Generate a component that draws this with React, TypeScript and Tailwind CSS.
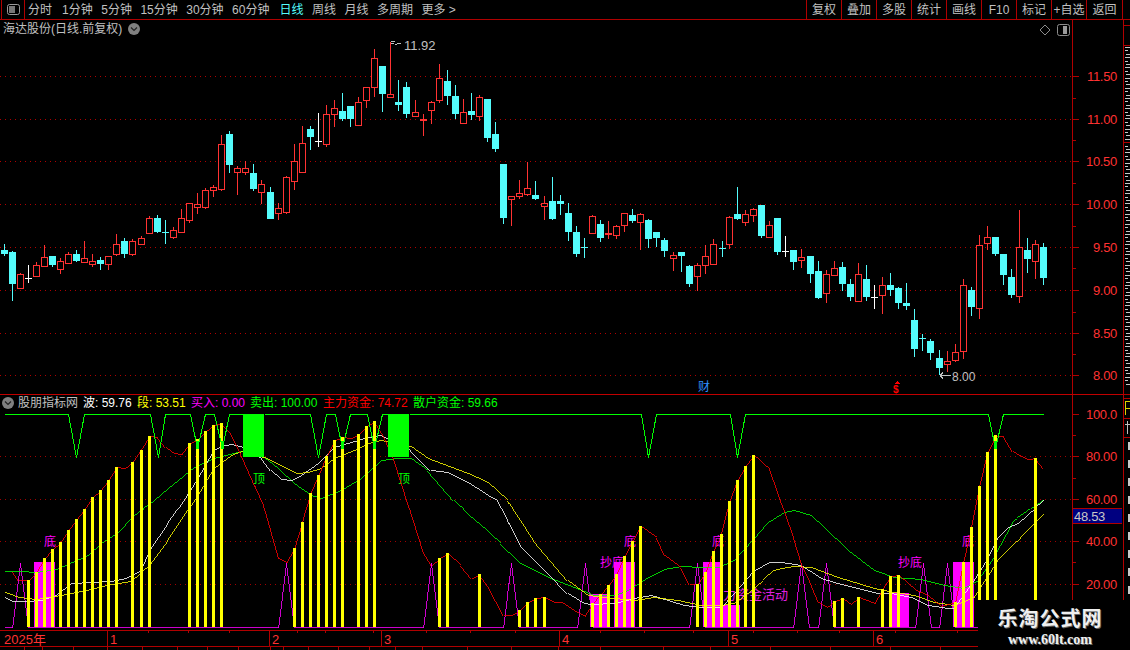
const RED = "#ff3232";
const CYAN = "#54fcfc";
const LINE = "#b00000";
const MAG = "#ff00ff";

type Raw = [number, number, number, number, number, string];

// read off the picture at 3x, so each group has its own origin
const conv = (rows: Raw[], ox: number, oy: number) =>
  rows.map(([x, hi, lo, top, bot, c]) => ({
    x: Math.round(ox + x / 3) - 0,
    hi: Math.round(oy + hi / 3),
    lo: Math.round(oy + lo / 3),
    top: Math.round(oy + top / 3),
    bot: Math.round(oy + bot / 3),
    c,
  }));

const candles = [
  ...conv(
    [
      [13, 372, 408, 390, 402, "c"], [37, 393, 543, 396, 492, "c"], [61, 459, 504, 462, 504, "r"],
      [85, 435, 489, 475, 475, "w"], [109, 426, 468, 435, 468, "r"], [133, 375, 438, 411, 438, "r"],
      [157, 408, 441, 408, 435, "c"], [181, 414, 462, 423, 447, "r"], [205, 396, 429, 402, 429, "r"],
      [229, 390, 426, 402, 423, "c"], [253, 363, 429, 414, 426, "r"], [277, 402, 441, 423, 432, "r"],
      [301, 411, 450, 420, 432, "c"], [325, 408, 450, 408, 432, "r"], [349, 342, 408, 372, 402, "r"],
      [373, 354, 414, 363, 402, "c"], [397, 357, 408, 363, 402, "r"], [424, 348, 375, 354, 372, "r"],
      [448, 288, 339, 294, 339, "r"], [472, 285, 339, 294, 336, "c"], [496, 300, 372, 337, 337, "c"],
      [520, 321, 357, 330, 351, "r"], [544, 267, 336, 294, 336, "r"], [568, 249, 309, 249, 300, "r"],
      [592, 219, 282, 252, 261, "r"], [616, 204, 267, 210, 261, "r"], [640, 195, 231, 201, 210, "r"],
      [664, 45, 213, 72, 207, "r"], [688, 33, 159, 42, 135, "c"], [712, 138, 225, 144, 156, "r"],
      [736, 123, 165, 144, 156, "r"], [760, 132, 213, 159, 207, "c"], [784, 180, 252, 192, 216, "r"],
      [811, 201, 297, 216, 297, "c"], [835, 249, 300, 264, 279, "r"], [859, 168, 282, 171, 276, "r"],
      [883, 72, 210, 123, 183, "r"], [907, 18, 159, 69, 156, "r"], [931, 18, 90, 27, 51, "c"],
      [955, -21, 81, 63, 63, "w"],
    ],
    0,
    120,
  ),
  ...conv(
    [
      [979, 315, 441, 343, 432, "r"], [1003, 300, 381, 325, 343, "r"], [1027, 280, 363, 333, 357, "c"],
      [1051, 318, 381, 318, 357, "c"], [1075, 290, 375, 306, 375, "r"], [1099, 262, 323, 262, 301, "r"],
      [1123, 148, 292, 175, 262, "r"], [1147, 198, 335, 198, 282, "c"], [1171, 125, 292, 283, 292, "r"],
      [1195, 240, 333, 306, 315, "c"], [1219, 246, 353, 261, 342, "c"], [1246, 300, 348, 336, 347, "r"],
    ],
    0,
    0,
  ),
  ...conv(
    [
      [166, 180, 228, 216, 228, "r"], [190, 222, 288, 237, 243, "f"], [214, 183, 252, 186, 210, "r"],
      [238, 72, 189, 114, 180, "r"], [262, 90, 195, 123, 168, "c"], [286, 135, 237, 168, 222, "c"],
      [310, 177, 252, 216, 249, "r"], [334, 159, 240, 213, 225, "c"], [358, 165, 243, 171, 228, "r"],
      [382, 177, 306, 177, 294, "c"], [406, 246, 336, 282, 327, "c"], [430, 372, 552, 372, 534, "c"],
      [454, 468, 558, 468, 477, "r"], [478, 420, 477, 459, 468, "r"], [502, 366, 468, 444, 462, "r"],
      [526, 423, 480, 465, 477, "c"], [553, 468, 540, 489, 498, "r"], [577, 411, 540, 483, 537, "c"],
      [601, 465, 525, 483, 492, "c"], [625, 489, 603, 519, 576, "c"], [649, 558, 651, 576, 642, "c"],
      [673, 594, 654, 622, 622, "c"], [697, 525, 579, 528, 579, "r"], [721, 540, 606, 552, 594, "c"],
      [745, 543, 597, 579, 585, "f"], [769, 555, 597, 558, 585, "r"], [793, 519, 576, 519, 555, "r"],
      [817, 507, 549, 525, 543, "c"], [841, 519, 630, 522, 546, "r"], [865, 537, 624, 540, 597, "c"],
      [889, 576, 621, 576, 594, "c"], [913, 594, 651, 600, 633, "c"], [940, 636, 693, 645, 654, "r"],
      [964, 636, 696, 636, 648, "c"], [988, 675, 741, 678, 732, "c"], [1012, 669, 753, 675, 708, "r"],
      [1036, 615, 702, 648, 675, "r"], [1060, 597, 672, 612, 672, "r"],
    ],
    360,
    40,
  ),
  ...conv(
    [
      [7, 183, 231, 204, 204, "c"], [28, 108, 207, 111, 192, "r"], [52, 21, 120, 102, 117, "c"],
      [76, 90, 138, 102, 126, "r"], [100, 84, 126, 87, 105, "r"], [124, 75, 174, 75, 168, "c"],
      [148, 123, 174, 135, 171, "r"], [172, 114, 225, 114, 216, "c"], [196, 168, 231, 212, 212, "w"],
      [220, 210, 270, 210, 246, "c"], [244, 207, 264, 231, 240, "r"], [271, 228, 309, 228, 282, "c"],
      [295, 243, 357, 273, 354, "c"], [319, 270, 369, 282, 339, "r"], [343, 243, 285, 264, 285, "r"],
      [367, 246, 333, 261, 312, "c"], [391, 297, 363, 312, 351, "c"], [415, 249, 366, 282, 363, "r"],
      [439, 255, 363, 297, 351, "c"], [463, 315, 387, 352, 352, "w"], [487, 291, 402, 315, 345, "r"],
      [511, 279, 348, 315, 330, "c"], [535, 321, 387, 324, 369, "c"], [559, 309, 390, 369, 378, "c"],
      [583, 387, 531, 420, 507, "c"], [607, 462, 513, 475, 475, "c"], [631, 477, 540, 483, 519, "c"],
      [658, 510, 585, 534, 564, "c"], [682, 513, 576, 543, 552, "r"], [706, 492, 546, 516, 540, "r"],
      [730, 297, 537, 315, 513, "r"], [754, 321, 408, 330, 381, "c"], [778, 165, 417, 195, 383, "r"],
      [802, 138, 210, 171, 189, "r"], [826, 171, 228, 171, 222, "c"], [850, 222, 315, 222, 285, "c"],
      [874, 267, 354, 291, 345, "c"], [898, 90, 369, 201, 348, "r"], [922, 174, 279, 210, 237, "c"],
      [946, 180, 297, 192, 243, "r"], [970, 189, 315, 201, 294, "c"],
    ],
    720,
    180,
  ),
];

const candleColor = (c: string) => (c === "c" ? CYAN : c === "w" ? "#ffffff" : RED);

const upperGrid = [76.5, 119.5, 161.5, 204.5, 247.5, 290.5, 333.5, 375.5];
const upperLabels = ["11.50", "11.00", "10.50", "10.00", "9.50", "9.00", "8.50", "8.00"];
const lowerGrid = [456.5, 499.5, 541.5, 584.5];

const bars: [number, number][] = [
  [28, 580], [36, 572], [44, 558], [52, 549], [60, 542], [68, 530], [76, 519], [84, 509], [92, 497], [100, 490],
  [108, 480], [116, 467], [132, 462], [141, 450], [149, 436], [189, 443], [197, 439], [205, 431], [213, 425],
  [221, 423], [310, 493], [318, 475], [326, 456], [334, 440], [342, 437], [358, 434], [366, 426], [374, 421],
  [294, 548], [302, 522], [439, 558], [447, 553], [479, 574], [519, 610], [527, 602], [535, 598], [544, 597],
  [592, 603], [600, 594], [608, 585], [616, 574], [624, 556], [632, 541], [640, 526], [697, 584], [705, 572],
  [713, 551], [721, 534], [729, 501], [737, 480], [745, 466], [753, 455], [834, 601], [842, 598], [858, 597],
  [882, 589], [890, 576], [898, 575], [955, 602], [963, 562], [971, 527], [979, 486], [987, 452], [995, 435],
  [1035, 458],
];

const fills = [
  [34, 562, 21, 65], [590, 594, 20, 33], [614, 562, 21, 65], [703, 562, 20, 65], [723, 605, 17, 22],
  [892, 593, 17, 34], [953, 562, 21, 65],
];

const spikes = [20, 286, 431, 511, 585, 697, 801, 826, 923, 947];
const magenta =
  "4,627 " +
  spikes.map((x) => `${x - 8},627 ${x - 4},595 ${x},562 ${x + 4},595 ${x + 8},627`).join(" ") +
  " 978,627";

const redLine =
  "12,571 18,580 28,580 36,572 44,558 52,549 60,542 68,530 76,519 84,509 92,497 100,490 108,480 116,467 124,468 132,462 140,450 149,436 157,437 165,447 173,453 181,454 189,443 197,439 205,431 213,425 221,423 230,432 240,453 263,505 278,558 286,562 294,548 302,522 310,493 318,475 326,456 334,440 342,437 350,438 358,434 366,426 374,421 383,435 393,458 408,505 422,550 431,565 439,558 447,553 460,565 471,578 479,574 487,585 503,615 511,615 519,610 527,602 535,598 544,597 553,602 561,602 573,610 584,616 592,603 600,594 608,585 616,574 624,556 632,541 640,526 656,537 664,555 680,567 689,584 697,584 705,572 713,551 721,534 729,501 737,480 745,466 753,455 769,468 793,537 801,563 809,580 818,602 826,607 834,601 842,598 850,604 858,597 874,603 882,589 890,576 898,575 915,590 927,595 940,606 955,602 963,562 971,527 979,486 987,452 995,436 1003,436 1012,451 1028,459 1035,458 1043,468";
const whiteLine =
  "4,597 12,601 24,601 40,600 55,595 70,583 90,582 110,581 125,578 140,570 150,548 167,523 183,500 197,478 213,450 220,446 230,444 243,447 261,458 270,470 280,479 290,480 300,475 317,463 333,447 350,442 367,437 380,435 410,450 430,470 447,472 467,482 487,495 497,500 507,520 520,545 547,572 567,593 583,603 590,604 613,603 633,598 650,595 667,600 683,605 700,607 720,607 733,593 753,570 770,562 780,562 800,565 820,578 833,582 857,588 877,593 890,593 910,597 927,605 947,608 953,608 973,580 987,558 997,537 1007,527 1017,523 1043,500";
const yellowLine =
  "4,592 18,597 35,599 60,595 85,590 110,584 130,581 150,563 167,540 197,495 213,468 230,455 243,450 263,457 280,465 295,473 307,472 320,468 333,458 353,450 367,443 380,440 410,446 427,458 467,473 487,482 507,500 533,540 567,580 587,595 613,598 633,600 653,597 677,600 700,605 720,605 733,603 753,588 773,570 780,568 793,566 810,567 837,577 873,588 893,592 913,595 933,602 953,605 973,597 997,560 1043,513";
const greenLine =
  "4,571 20,571 35,572 55,569 87,555 100,543 117,532 133,515 147,505 167,488 193,467 213,458 240,451 263,457 277,468 293,483 310,495 320,498 340,490 360,478 380,460 397,458 410,458 427,470 453,500 477,522 500,543 520,563 547,577 573,587 593,595 613,595 627,590 647,577 663,569 680,566 700,567 717,567 733,560 753,538 767,522 783,512 793,510 810,515 823,527 847,550 873,570 893,577 920,579 943,585 963,588 977,580 993,557 1013,520 1043,499";

const vs = [
  "4,414 68,414 76,457 84,414 150,414 158,457 165,414 190,414 197,448 205,414 214,414 222,448 229,414 243,414",
  "264,414 310,414 318,457 326,414 335,414 342,448 350,414 367,414 374,448 382,414 388,414",
  "409,414 641,414 648,457 656,414 730,414 737,457 745,414 988,414 995,448 1003,414 1043,414",
];

const marks = [
  { t: "底", x: 44, y: 546, c: MAG },
  { t: "抄底", x: 600, y: 567, c: MAG },
  { t: "底", x: 624, y: 546, c: MAG },
  { t: "底", x: 712, y: 546, c: MAG },
  { t: "抄底", x: 898, y: 567, c: MAG },
  { t: "底", x: 962, y: 546, c: MAG },
  { t: "顶", x: 253, y: 483, c: "#00ff00" },
  { t: "顶", x: 398, y: 483, c: "#00ff00" },
];

const leftTabs = ["1分钟", "5分钟", "15分钟", "30分钟", "60分钟"];
const rightTabs = ["复权", "叠加", "多股", "统计", "画线", "F10", "标记", "+自选", "返回"];

const months = [
  { t: "1", x: 107 }, { t: "2", x: 269 }, { t: "3", x: 381 }, { t: "4", x: 559 }, { t: "5", x: 728 }, { t: "6", x: 873 },
];
const minorTicks = [148, 188, 229, 297, 325, 373, 426, 470, 515, 600, 644, 693, 753, 797, 839, 895, 957];
const bottomTicks = [24, 42, 73, 107, 142, 177, 207, 238, 270, 283, 308, 338, 369, 395, 422, 467, 511, 558, 600, 663, 710, 770, 830, 890, 940];

// the list beside the chart runs off the window, only its left edge shows
const sideRows = Array.from({ length: 100 }, (_, i) => 47 + i * 3.4).filter((y) => y < 393 && Math.abs(y - 142) > 2);

const Circle = () => (
  <span className="inline-flex w-3 h-3 rounded-full bg-[#808080] items-center justify-center">
    <svg width="8" height="8" viewBox="0 0 8 8" fill="none" stroke="#222" strokeWidth="1.2">
      <path d="M1 2.5 L4 5.5 L7 2.5" />
    </svg>
  </span>
);

const PanelIcon = () => (
  <svg width="13" height="12" viewBox="0 0 13 12">
    <rect x="0.5" y="0.5" width="12" height="11" rx="2" fill="none" stroke="#8c8c8c" />
    <rect x="6" y="2" width="4" height="8" fill="#9a9a9a" />
  </svg>
);

const Axis = ({ items }: { items: { y: number; t: string }[] }) => (
  <>
    {items.map((i) => (
      <g key={i.t}>
        <rect x="0" y={Math.floor(i.y)} width="6" height="1" fill={LINE} />
        <text x="44" y={i.y + 4} textAnchor="end" fill={RED} fontSize="13" letterSpacing="-0.3">
          {i.t}
        </text>
      </g>
    ))}
  </>
);

export default function App() {
  return (
    <div className="relative w-[1130px] h-[650px] overflow-hidden bg-black flex flex-col text-[12px] leading-none text-[#c0c0c0] font-['Liberation_Sans','Noto_Sans_CJK_SC',sans-serif]">
      {/* toolbar */}
      <div className="h-5 shrink-0 flex items-stretch border-b border-[#b00000]">
        <div className="w-6 ml-px border-x border-[#b00000] flex items-center justify-center pl-px">
          <svg width="13" height="11" viewBox="0 0 13 11">
            <rect x="0.5" y="0.5" width="12" height="10" rx="2" fill="none" stroke="#9a9a9a" />
            <rect x="2" y="2" width="6" height="7" fill="#777" />
          </svg>
        </div>
        <div className="flex items-center pl-[3px] gap-[8.5px]">
          <span className="mr-[1.5px]">分时</span>
          {leftTabs.map((t) => (
            <span key={t}>{t}</span>
          ))}
          <span className="ml-[1.5px] text-[#54fcfc]">日线</span>
          <span>周线</span>
          <span>月线</span>
          <span>多周期</span>
          <span>更多 &gt;</span>
        </div>
        <div className="ml-auto mr-[7px] flex items-stretch">
          {rightTabs.map((t) => (
            <span key={t} className="w-[35px] flex items-center justify-center border-l border-r-0 border-[#b00000] last:border-r last:w-[37px]">
              {t}
            </span>
          ))}
        </div>
      </div>

      <div className="flex flex-1 min-h-0">
        <div className="w-[1123px] shrink-0 flex flex-col">
          {/* price chart */}
          <div className="flex h-[375px] shrink-0 border-b border-[#c00000]">
            <div className="relative w-[1072px] shrink-0">
              <svg width="1072" height="374" viewBox="0 20 1072 374" shapeRendering="crispEdges" className="block">
                {upperGrid.map((y) => (
                  <line key={y} x1="0" x2="1072" y1={y} y2={y} stroke="#b00000" strokeDasharray="1 4" />
                ))}
                {candles.map((k, i) => {
                  const color = candleColor(k.c);
                  const doji = k.top === k.bot;
                  const solid = k.c === "c" || k.c === "f";
                  return (
                    <g key={i}>
                      <rect x={k.x} y={k.hi} width="1" height={k.lo - k.hi} fill={color} />
                      {doji ? (
                        <rect x={k.x - 3} y={k.top} width="7" height="1" fill={color} />
                      ) : solid ? (
                        <rect x={k.x - 3} y={k.top} width="7" height={k.bot - k.top} fill={color} />
                      ) : (
                        <rect x={k.x - 2.5} y={k.top + 0.5} width="6" height={k.bot - k.top} fill="#000" stroke={color} />
                      )}
                    </g>
                  );
                })}
                <path d="M391 41.5 h4 M391 43.5 h3 M395 44.5 h2 M397 43.5 h4" stroke="#c0c0c0" fill="none" />
                <text x="404" y="50" fill="#c0c0c0" fontSize="13">11.92</text>
                <path d="M951 375.5 H940 M940 375.5 l3 -3 M940 375.5 l3 3" stroke="#c0c0c0" fill="none" />
                <text x="952" y="381" fill="#c0c0c0" fontSize="12">8.00</text>
                <text x="698" y="391" fill="#2f8fff" fontSize="12">财</text>
                <path d="M897 381 l3 3 h-6 z" fill="#ff0000" />
                <text x="893" y="393" fill="#ff0000" fontSize="10" fontWeight="700">$</text>
              </svg>
              <div className="absolute left-[3px] top-[3px] flex items-center gap-[6px]">
                <span>海达股份(日线.前复权)</span>
                <Circle />
              </div>
              <div className="absolute right-[2px] top-[4px] flex items-center gap-[6px]">
                <svg width="12" height="12" viewBox="0 0 12 12" fill="none" stroke="#8c8c8c">
                  <path d="M6 1 L11 6 L6 11 L1 6 Z" />
                </svg>
                <PanelIcon />
              </div>
            </div>
            <div className="flex-1 border-l border-[#b00000]">
              <svg width="50" height="374" viewBox="0 20 50 374" className="block" shapeRendering="crispEdges">
                <Axis items={upperGrid.map((y, i) => ({ y, t: upperLabels[i] }))} />
                {[98, 140, 183, 226, 268, 312, 354].map((y) => (
                  <rect key={y} x="0" y={y} width="3" height="1" fill={LINE} />
                ))}
              </svg>
            </div>
          </div>

          {/* indicator */}
          <div className="flex h-[235px] shrink-0">
            <div className="relative w-[1072px] shrink-0">
              <svg width="1072" height="235" viewBox="0 395 1072 235" shapeRendering="crispEdges" className="block">
                {lowerGrid.map((y) => (
                  <line key={y} x1="0" x2="1072" y1={y} y2={y} stroke="#a00000" strokeDasharray="1 4" />
                ))}
                <text x="710" y="599" fill="#e020e0" fontSize="13">主力资金活动</text>
                {marks.map((m) => (
                  <text key={m.x} x={m.x} y={m.y} fill={m.c} fontSize="12">{m.t}</text>
                ))}
                {fills.map(([x, y, w, h]) => (
                  <rect key={x} x={x} y={y} width={w} height={h} fill={MAG} />
                ))}
                <g transform="translate(0.5 0.5)" strokeWidth="0.8">
                  <polyline points={magenta} fill="none" stroke={MAG} />
                  <polyline points={greenLine} fill="none" stroke="#00ff00" />
                  <polyline points={whiteLine} fill="none" stroke="#ffffff" />
                  <polyline points={yellowLine} fill="none" stroke="#ffff00" />
                  <polyline points={redLine} fill="none" stroke="#ff0000" />
                </g>
                {bars.map(([x, top]) => (
                  <rect key={x} x={x - 1} y={top} width="3" height={627 - top} fill="#ffff00" />
                ))}
                <g transform="translate(0.5 0.5)">
                  {vs.map((p) => (
                    <polyline key={p} points={p} fill="none" stroke="#00ff00" />
                  ))}
                </g>
                {[197, 222, 342, 374, 995].map((x) => (
                  <rect key={x} x={x - 1} y="441" width="3" height="8" fill="#00ff00" />
                ))}
                <rect x="243" y="414" width="21" height="43" fill="#00ff00" />
                <rect x="388" y="414" width="21" height="43" fill="#00ff00" />
              </svg>
              <div className="absolute left-[2px] top-[2px] flex items-center whitespace-nowrap">
                <Circle />
                <span className="ml-1 w-[65px]">股朋指标网</span>
                <span className="text-white w-[54px]">波: 59.76</span>
                <span className="text-[#ffff00] w-[54px]">段: 53.51</span>
                <span className="text-[#ff00ff] w-[59px]">买入: 0.00</span>
                <span className="text-[#00ff00] w-[73px]">卖出: 100.00</span>
                <span className="text-[#ff0000] w-[90px]">主力资金: 74.72</span>
                <span className="text-[#00ff00]">散户资金: 59.66</span>
              </div>
            </div>
            <div className="relative flex-1 border-l border-[#b00000]">
              <svg width="50" height="235" viewBox="0 395 50 235" className="block" shapeRendering="crispEdges">
                <Axis
                  items={[
                    { y: 414.5, t: "100.0" },
                    { y: 456.5, t: "80.00" },
                    { y: 499.5, t: "60.00" },
                    { y: 541.5, t: "40.00" },
                    { y: 584.5, t: "20.00" },
                  ]}
                />
                {[435, 478, 562, 605].map((y) => (
                  <rect key={y} x="0" y={y} width="3" height="1" fill={LINE} />
                ))}
              </svg>
              <div className="absolute left-0 top-[113px] w-[49px] h-4 bg-[#000080] border-y border-[#b00000] flex items-center pl-px text-[13px] tracking-[-0.3px] text-[#c8c8c8]">
                48.53
              </div>
            </div>
          </div>

          {/* time axis */}
          <div className="relative h-[17px] shrink-0 border-y border-[#b00000] text-[#ff3232] text-[13px]">
            <span className="absolute left-[4px] top-[2px]">2025年</span>
            {months.map((m) => (
              <span key={m.t} className="absolute top-0 h-[15px] pl-[2px] pt-[2px] border-l border-[#b00000]" style={{ left: m.x }}>
                {m.t}
              </span>
            ))}
            {minorTicks.map((x) => (
              <i key={x} className="absolute top-0 w-px h-[2px] bg-[#b00000]" style={{ left: x }} />
            ))}
          </div>
          <div className="relative flex-1">
            {bottomTicks.map((x) => (
              <i key={x} className="absolute top-0 w-px h-[3px] bg-[#b00000]" style={{ left: x }} />
            ))}
          </div>
        </div>

        {/* clipped side panel */}
        <div className="flex-1 border-l border-[#b00000] overflow-hidden">
          <svg width="6" height="630" viewBox="1124 20 6 630" className="block" shapeRendering="crispEdges">
            {[25, 45, 142, 394, 398, 418, 437].map((y) => (
              <rect key={y} x="1124" y={y} width="6" height="1" fill={LINE} />
            ))}
            {sideRows.map((y, i) => (
              <rect key={y} x={1125 + (i % 3 === 2 ? 1 : 0)} y={Math.round(y)} width={i % 3 === 1 ? 3 : 5} height="1" fill="#c8c8c8" />
            ))}
            <path d="M1125.5 415 V401.5 H1130 M1125.5 408.5 H1130" fill="none" stroke="#e0d000" />
            <path d="M1125 424.5 H1130 M1127.5 421 V434" fill="none" stroke="#c0c0c0" />
            {[442, 460, 478, 496, 514, 532, 550, 568, 586].map((y) => (
              <rect key={y} x="1128" y={y} width="2" height="8" fill="#c8c8c8" />
            ))}
          </svg>
        </div>
      </div>

      {/* site watermark */}
      <div className="absolute left-[978px] top-[600px] w-[152px] h-[50px] bg-black flex flex-col items-center pt-[8px] pr-[8px]">
        <span className="text-[20px] leading-[22px] font-bold text-[#f0f0f0] [text-shadow:1px_1px_0_#666] tracking-[1px]">
          乐淘公式网
        </span>
        <span className="mt-[3px] font-['Liberation_Serif',serif] text-[14px] font-bold text-[#f0f0f0] [text-shadow:1px_1px_0_#666]">
          www.60lt.com
        </span>
      </div>
    </div>
  );
}
